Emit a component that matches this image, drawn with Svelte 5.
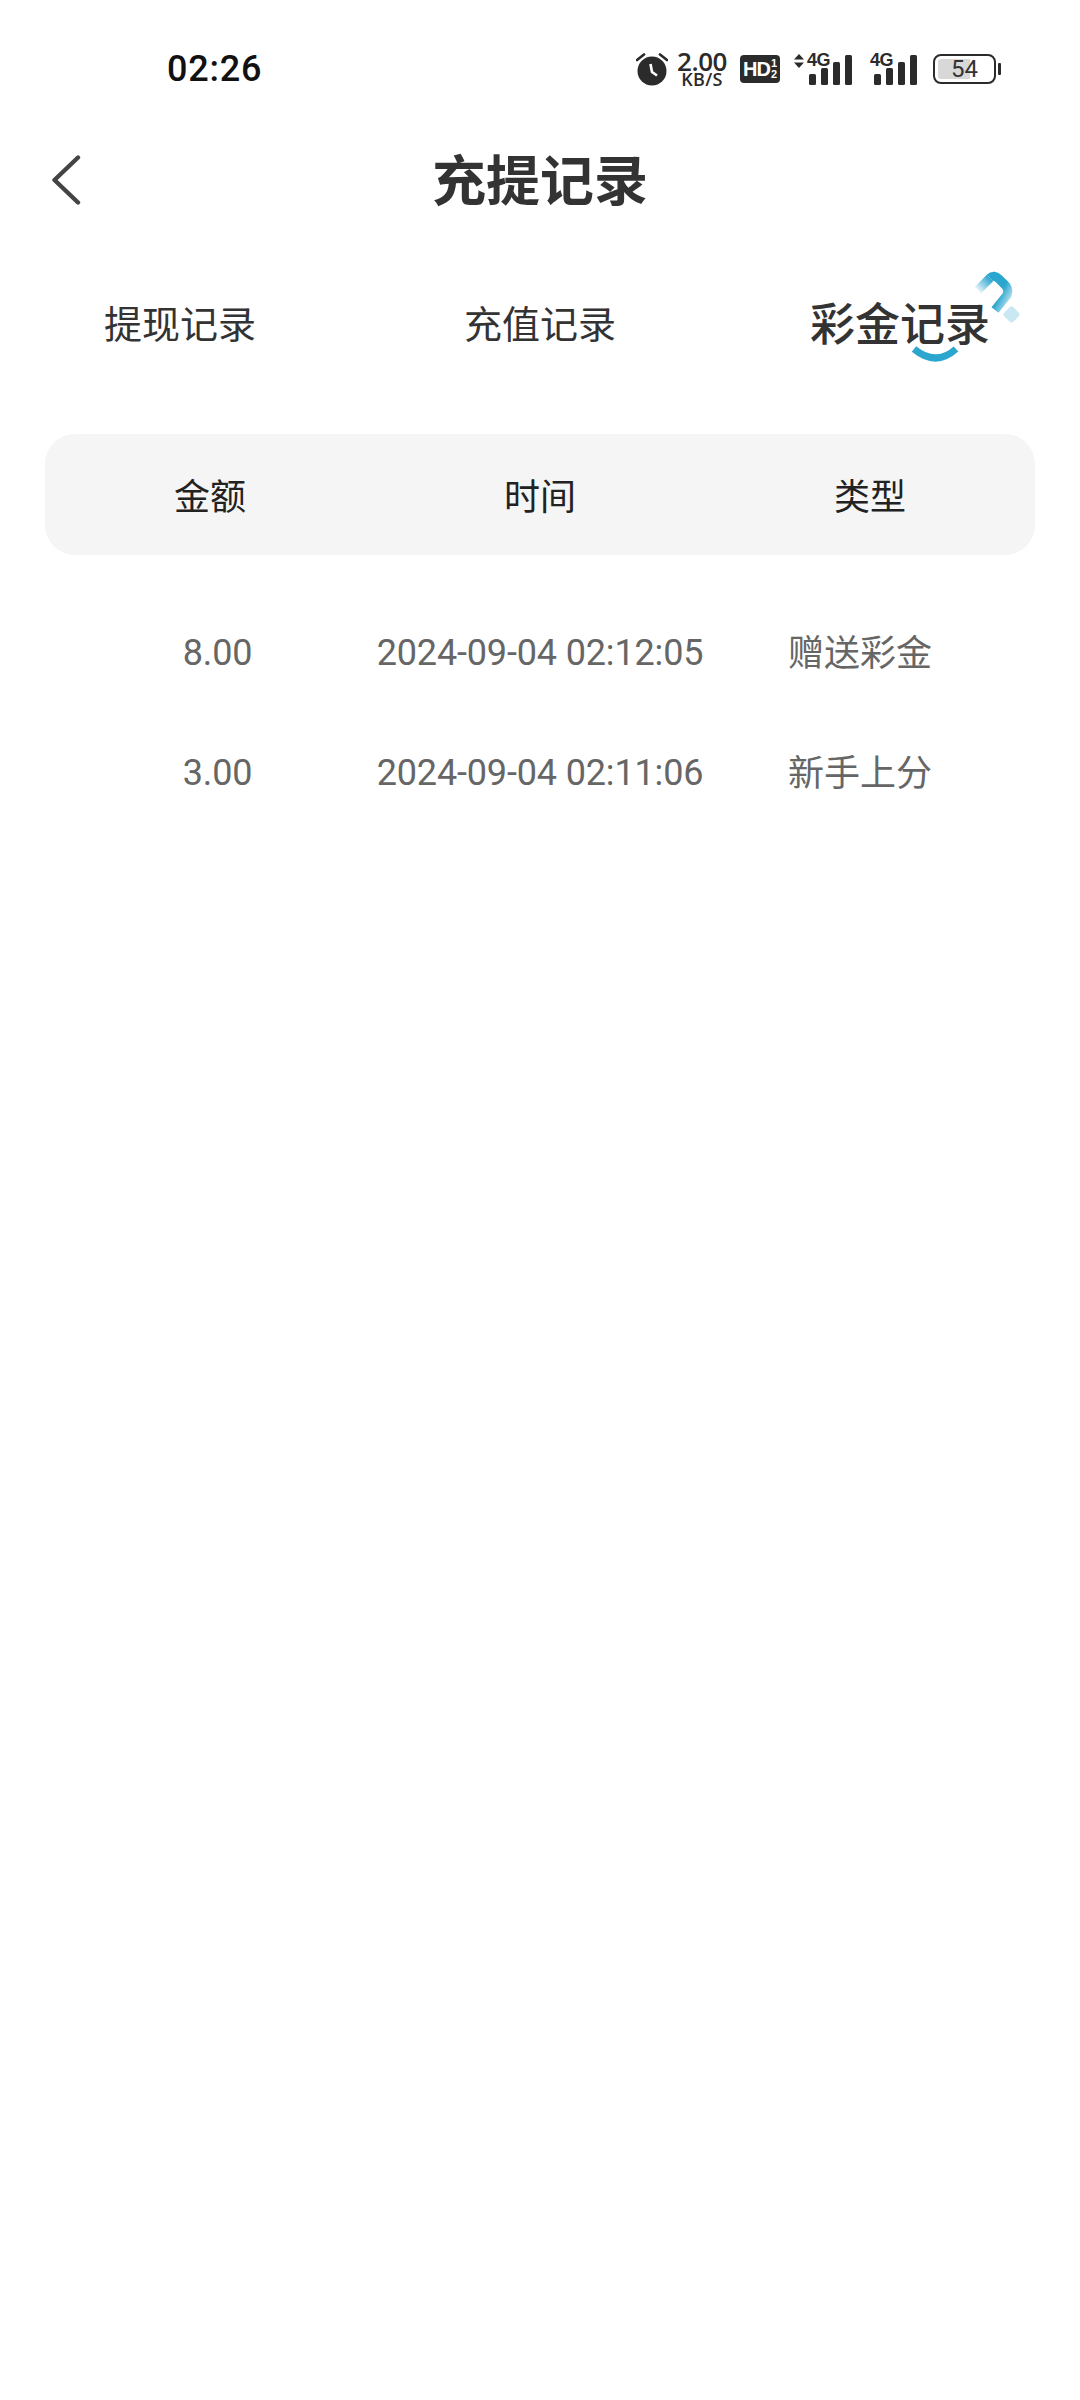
<script lang="ts">
  const tabs = [
    { label: "提现记录", active: false },
    { label: "充值记录", active: false },
    { label: "彩金记录", active: true },
  ];
  const columns = ["金额", "时间", "类型"];
  const records = [
    { amount: "8.00", time: "2024-09-04 02:12:05", type: "赠送彩金" },
    { amount: "3.00", time: "2024-09-04 02:11:06", type: "新手上分" },
  ];
</script>

<div class="page">
  <header class="status-bar">
    <span class="clock">02:26</span>
    <div class="status-icons">
      <svg class="alarm" viewBox="0 0 32 34" aria-hidden="true">
        <path d="M1 8 8 2.5M31 8 24 2.5" stroke="#2b2b2b" stroke-width="2.6" fill="none" stroke-linecap="round" />
        <circle cx="16" cy="19" r="14.5" fill="#2b2b2b" />
        <path d="M14.5 12 16 20l5 3.5" stroke="#fff" stroke-width="2.6" fill="none" />
      </svg>
      <div class="speed">
        <span class="speed-value">2.00</span>
        <span class="speed-unit">KB/S</span>
      </div>
      <div class="hd">
        <span>HD</span>
        <div class="hd-slots"><b>1</b><b>2</b></div>
      </div>
      <div class="signal first">
        <svg class="updown" viewBox="0 0 10 14" aria-hidden="true">
          <path d="M5 0 10 5.5H0ZM5 14 0 8.5H10Z" fill="#2b2b2b" />
        </svg>
        <span class="net">4G</span>
        <div class="bars">
          <i style="height: 11px"></i><i style="height: 17px"></i><i style="height: 23px"></i><i style="height: 30px"></i>
        </div>
      </div>
      <div class="signal second">
        <span class="net">4G</span>
        <div class="bars">
          <i style="height: 11px"></i><i style="height: 17px"></i><i style="height: 23px"></i><i style="height: 30px"></i>
        </div>
      </div>
      <div class="battery">
        <div class="battery-body">
          <div class="battery-fill" style="width: 54%"></div>
          <span>54</span>
        </div>
        <div class="battery-nub"></div>
      </div>
    </div>
  </header>

  <nav class="nav-bar">
    <svg class="back" viewBox="0 0 30 50" aria-hidden="true">
      <path d="M27 2.5 3.5 25 27 47.5" stroke="#444" stroke-width="4.4" fill="none" stroke-linecap="round" stroke-linejoin="round" />
    </svg>
    <h1>充提记录</h1>
  </nav>

  <div class="tabs">
    {#each tabs as tab}
      <div class="tab" class:active={tab.active}>
        <span class="tab-label">
          {tab.label}
          {#if tab.active}
            <svg class="flourish" viewBox="0 0 120 100" aria-hidden="true">
              <defs>
                <linearGradient id="arc-fade" x1="0" y1="0" x2="1" y2="1">
                  <stop offset="0" stop-color="#2ba6cf" />
                  <stop offset="0.55" stop-color="#2ba6cf" />
                  <stop offset="1" stop-color="#cfeaf4" />
                </linearGradient>
                <linearGradient id="arc-tail" x1="0" y1="1" x2="1" y2="0">
                  <stop offset="0" stop-color="#e4f3f9" />
                  <stop offset="1" stop-color="#2ba6cf" />
                </linearGradient>
              </defs>
              <path d="M69 26 81 14" stroke="url(#arc-tail)" stroke-width="9" fill="none" />
              <path d="M81 14Q85 10 90 15L97 22Q100 26 98 31L86 46" stroke="url(#arc-fade)" stroke-width="9" fill="none" />
              <rect x="96" y="44" width="13" height="13" rx="3" fill="#c9e8f3" transform="rotate(45 102.5 50.5)" />
              <path d="M5 85Q27 103 47 85" stroke="#2ba6cf" stroke-width="7" fill="none" />
            </svg>
          {/if}
        </span>
      </div>
    {/each}
  </div>

  <section class="table">
    <div class="table-head">
      {#each columns as column}
        <span>{column}</span>
      {/each}
    </div>
    {#each records as record}
      <div class="table-row">
        <span class="amount">{record.amount}</span>
        <span class="time">{record.time}</span>
        <span class="type">{record.type}</span>
      </div>
    {/each}
  </section>
</div>

<style>
  :global(body) {
    margin: 0;
    background: #fff;
  }

  .page {
    width: 1080px;
    height: 2400px;
    overflow: hidden;
    background: #fff;
    font-family: "Noto Sans CJK SC", Roboto, sans-serif;
  }

  .status-bar {
    display: flex;
    align-items: center;
    justify-content: space-between;
    box-sizing: border-box;
    height: 138px;
    padding: 0 79px 0 167px;
    color: #111;
  }

  .clock {
    font-family: Roboto, sans-serif;
    font-size: 36px;
    font-weight: 500;
    letter-spacing: 0.8px;
  }

  .status-icons {
    display: flex;
    align-items: center;
    height: 40px;
  }

  .alarm {
    width: 32px;
    height: 34px;
    margin-right: 9px;
  }

  .speed {
    display: flex;
    flex-direction: column;
    align-items: center;
    width: 50px;
    margin-right: 13px;
    color: #2b2b2b;
    font-family: "Open Sans", sans-serif;
    line-height: 1;
  }

  .speed-value {
    font-size: 26px;
    font-weight: 600;
    line-height: 20px;
    letter-spacing: -0.4px;
  }

  .speed-unit {
    font-size: 18px;
    font-weight: 600;
    line-height: 16px;
    letter-spacing: 0.3px;
  }

  .hd {
    display: flex;
    align-items: center;
    justify-content: center;
    gap: 1px;
    box-sizing: border-box;
    width: 40px;
    height: 28px;
    margin-right: 14px;
    border-radius: 4px;
    background: #2b2b2b;
    color: #fff;
    font-family: "Liberation Sans", sans-serif;
    font-size: 20px;
    font-weight: 700;
    letter-spacing: -1px;
  }

  .hd-slots {
    display: flex;
    flex-direction: column;
    font-size: 11px;
    line-height: 11px;
    letter-spacing: 0;
  }

  .hd-slots b {
    font-weight: 700;
  }

  .signal {
    position: relative;
    display: flex;
    align-items: flex-end;
    height: 32px;
  }

  .signal.first {
    width: 58px;
    margin-right: 18px;
  }

  .signal.second {
    width: 47px;
    margin-right: 16px;
  }

  .updown {
    position: absolute;
    top: 1px;
    left: 0;
    width: 10px;
    height: 14px;
  }

  .net {
    position: absolute;
    top: -2px;
    color: #2b2b2b;
    font-family: "Liberation Sans", sans-serif;
    font-size: 18px;
    font-weight: 700;
    line-height: 18px;
    letter-spacing: -0.5px;
  }

  .first .net {
    left: 13px;
  }

  .second .net {
    left: 0;
  }

  .bars {
    display: flex;
    align-items: flex-end;
    gap: 5px;
    margin-left: auto;
  }

  .bars i {
    display: block;
    width: 7px;
    border-radius: 1.5px;
    background: #2b2b2b;
  }

  .battery {
    display: flex;
    align-items: center;
    gap: 2px;
  }

  .battery-body {
    position: relative;
    display: flex;
    align-items: center;
    justify-content: center;
    box-sizing: border-box;
    width: 63px;
    height: 30px;
    padding: 3px;
    border: 2px solid #2b2b2b;
    border-radius: 8px;
  }

  .battery-fill {
    position: absolute;
    top: 3px;
    bottom: 3px;
    left: 3px;
    border-radius: 3px 0 0 3px;
    background: #d8d8d8;
  }

  .battery-body span {
    position: relative;
    color: #333;
    font-family: Roboto, sans-serif;
    font-size: 24px;
    line-height: 1;
  }

  .battery-nub {
    width: 3px;
    height: 12px;
    border-radius: 1px;
    background: #2b2b2b;
  }

  .nav-bar {
    position: relative;
    display: flex;
    align-items: flex-start;
    justify-content: center;
    height: 86px;
  }

  .back {
    position: absolute;
    top: 17px;
    left: 51px;
    width: 30px;
    height: 50px;
  }

  h1 {
    margin: 0;
    color: #333;
    font-size: 54px;
    font-weight: 700;
    line-height: 80px;
  }

  .tabs {
    display: grid;
    grid-template-columns: repeat(3, 1fr);
    align-items: center;
    box-sizing: border-box;
    height: 120px;
    margin-top: 40px;
    padding-bottom: 6px;
  }

  .tab {
    display: flex;
    justify-content: center;
    color: #333;
    font-size: 38px;
  }

  .tab.active {
    font-size: 45px;
    font-weight: 500;
  }

  .tab-label {
    position: relative;
    z-index: 0;
  }

  .flourish {
    position: absolute;
    top: -25px;
    right: -39px;
    z-index: -1;
    width: 120px;
    height: 100px;
  }

  .table {
    margin: 50px 45px 0;
  }

  .table-head {
    display: grid;
    grid-template-columns: repeat(3, 1fr);
    align-items: center;
    box-sizing: border-box;
    height: 121px;
    margin-bottom: 38px;
    padding-bottom: 2px;
    border-radius: 30px;
    background: #f5f5f5;
    color: #222;
    font-size: 36px;
    text-align: center;
  }

  .table-row {
    display: grid;
    grid-template-columns: repeat(3, 1fr);
    align-items: center;
    height: 120px;
    color: #666;
    font-size: 36px;
    text-align: center;
  }

  .amount,
  .time {
    font-family: Roboto, sans-serif;
    letter-spacing: -0.15px;
  }

  .amount {
    padding-left: 15px;
  }

  .type {
    padding-right: 20px;
    padding-bottom: 6px;
  }
</style>
